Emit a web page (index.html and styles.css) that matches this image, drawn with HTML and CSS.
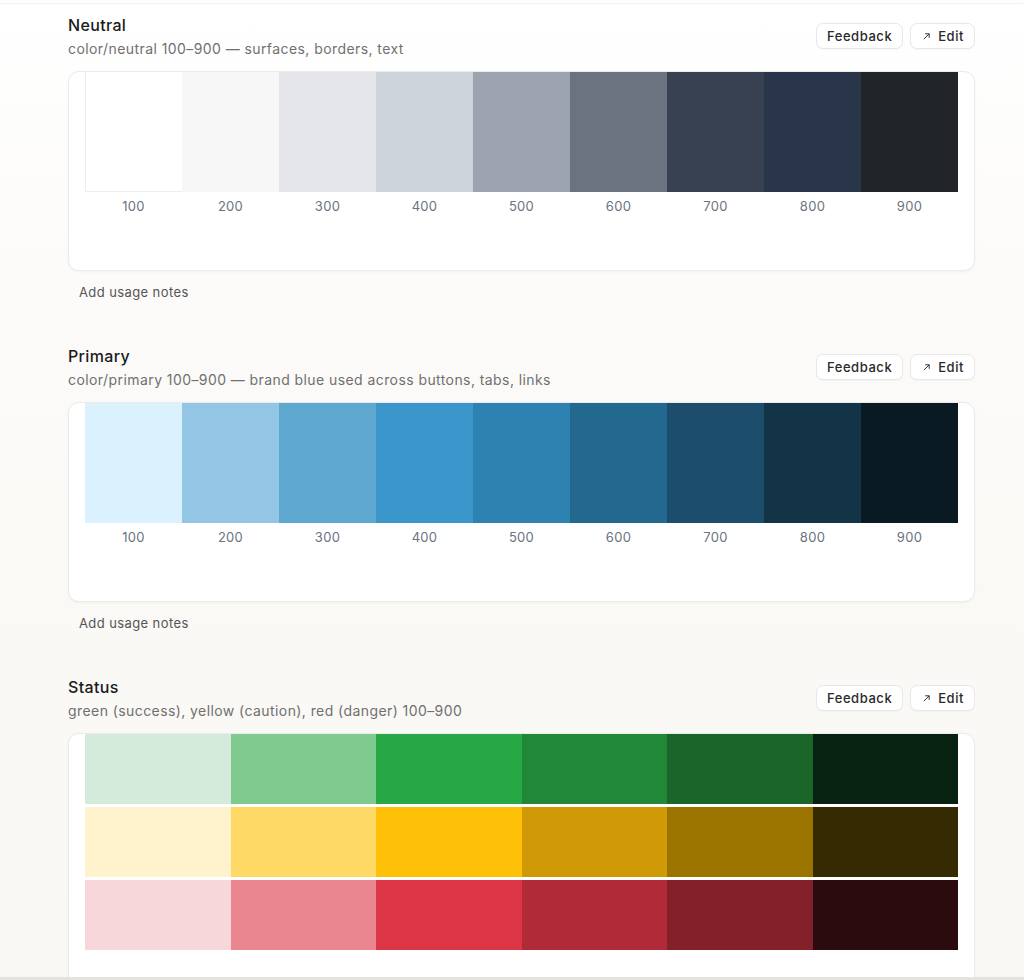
FILE: index.html
```html
<!DOCTYPE html>
<html lang="en">
<head>
<meta charset="utf-8">
<title>Color tokens</title>
<link rel="stylesheet" href="styles.css">
</head>
<body>
<div class="topline"></div>
<main class="page">

  <section class="section">
    <header class="head">
      <div class="titles">
        <h2 class="title">Neutral</h2>
        <p class="sub">color/neutral 100–900 — surfaces, borders, text</p>
      </div>
      <div class="actions">
        <button class="btn">Feedback</button>
        <button class="btn"><svg class="arrow" viewBox="0 0 10 10" width="9" height="9"><path d="M2 8 L8 2 M3.5 2 H8 V6.5" fill="none" stroke="currentColor" stroke-width="1.1"/></svg>Edit</button>
      </div>
    </header>
    <div class="card">
      <div class="scale">
        <div class="step"><div class="sw n100 edge"></div><span class="lbl">100</span></div>
        <div class="step"><div class="sw n200"></div><span class="lbl">200</span></div>
        <div class="step"><div class="sw n300"></div><span class="lbl">300</span></div>
        <div class="step"><div class="sw n400"></div><span class="lbl">400</span></div>
        <div class="step"><div class="sw n500"></div><span class="lbl">500</span></div>
        <div class="step"><div class="sw n600"></div><span class="lbl">600</span></div>
        <div class="step"><div class="sw n700"></div><span class="lbl">700</span></div>
        <div class="step"><div class="sw n800"></div><span class="lbl">800</span></div>
        <div class="step"><div class="sw n900"></div><span class="lbl">900</span></div>
      </div>
    </div>
    <p class="notes">Add usage notes</p>
  </section>

  <section class="section">
    <header class="head">
      <div class="titles">
        <h2 class="title">Primary</h2>
        <p class="sub">color/primary 100–900 — brand blue used across buttons, tabs, links</p>
      </div>
      <div class="actions">
        <button class="btn">Feedback</button>
        <button class="btn"><svg class="arrow" viewBox="0 0 10 10" width="9" height="9"><path d="M2 8 L8 2 M3.5 2 H8 V6.5" fill="none" stroke="currentColor" stroke-width="1.1"/></svg>Edit</button>
      </div>
    </header>
    <div class="card">
      <div class="scale">
        <div class="step"><div class="sw p100"></div><span class="lbl">100</span></div>
        <div class="step"><div class="sw p200"></div><span class="lbl">200</span></div>
        <div class="step"><div class="sw p300"></div><span class="lbl">300</span></div>
        <div class="step"><div class="sw p400"></div><span class="lbl">400</span></div>
        <div class="step"><div class="sw p500"></div><span class="lbl">500</span></div>
        <div class="step"><div class="sw p600"></div><span class="lbl">600</span></div>
        <div class="step"><div class="sw p700"></div><span class="lbl">700</span></div>
        <div class="step"><div class="sw p800"></div><span class="lbl">800</span></div>
        <div class="step"><div class="sw p900"></div><span class="lbl">900</span></div>
      </div>
    </div>
    <p class="notes">Add usage notes</p>
  </section>

  <section class="section">
    <header class="head">
      <div class="titles">
        <h2 class="title">Status</h2>
        <p class="sub">green (success), yellow (caution), red (danger) 100–900</p>
      </div>
      <div class="actions">
        <button class="btn">Feedback</button>
        <button class="btn"><svg class="arrow" viewBox="0 0 10 10" width="9" height="9"><path d="M2 8 L8 2 M3.5 2 H8 V6.5" fill="none" stroke="currentColor" stroke-width="1.1"/></svg>Edit</button>
      </div>
    </header>
    <div class="card status">
      <div class="srow">
        <div class="ss g1"></div><div class="ss g2"></div><div class="ss g3"></div><div class="ss g4"></div><div class="ss g5"></div><div class="ss g6"></div>
      </div>
      <div class="srow">
        <div class="ss y1"></div><div class="ss y2"></div><div class="ss y3"></div><div class="ss y4"></div><div class="ss y5"></div><div class="ss y6"></div>
      </div>
      <div class="srow">
        <div class="ss r1"></div><div class="ss r2"></div><div class="ss r3"></div><div class="ss r4"></div><div class="ss r5"></div><div class="ss r6"></div>
      </div>
    </div>
  </section>

</main>
<div class="bottombar"></div>
</body>
</html>
```

FILE: styles.css
```css
* { box-sizing: border-box; }

html, body {
  margin: 0;
  padding: 0;
}

body {
  font-family: Inter, "Liberation Sans", Arial, sans-serif;
  background: linear-gradient(180deg, #ffffff 0px, #fcfbf9 260px, #faf9f6 600px, #f9f8f5 980px);
  min-height: 980px;
  color: #1d1d1f;
}

.topline {
  height: 4px;
  border-bottom: 1px solid #f0f0f0;
}

.page {
  padding: 11px 49px 0 68px;
  width: 1024px;
}

.section {
  margin-bottom: 46px;
}

.head {
  display: flex;
  justify-content: space-between;
  align-items: center;
}

.title {
  margin: 0;
  font-size: 16px;
  line-height: 20px;
  font-weight: 500;
  letter-spacing: 0.35px;
  color: #1a1a1a;
}

.sub {
  margin: 4px 0 0;
  font-size: 14px;
  line-height: 20px;
  letter-spacing: 0.42px;
  color: #707070;
}

.actions {
  display: flex;
  gap: 7px;
  margin-top: -2px;
}

.btn {
  font-family: inherit;
  display: flex;
  align-items: center;
  gap: 7px;
  height: 26px;
  padding: 0 10px;
  font-size: 13px;
  font-weight: 500;
  letter-spacing: 0.55px;
  color: #2a2a2a;
  background: #ffffff;
  border: 1px solid #e8e8e8;
  border-radius: 7px;
  box-shadow: 0 1px 1px rgba(0, 0, 0, 0.03);
}

.arrow { color: #333; margin-left: 1px; }

.card {
  margin-top: 12px;
  background: #ffffff;
  border: 1px solid #ebebeb;
  border-radius: 11px;
  box-shadow: 0 1px 3px rgba(0, 0, 0, 0.04);
  padding: 0 16px 56px 16px;
}

.scale {
  display: grid;
  grid-template-columns: repeat(9, 1fr);
}

.step {
  display: flex;
  flex-direction: column;
  align-items: center;
}

.sw {
  width: 100%;
  height: 120px;
}

.sw.edge { box-shadow: inset 1px 0 0 #eeeeee, inset 0 -1px 0 #eeeeee; }

.lbl {
  padding-top: 6px;
  font-size: 13px;
  line-height: 16px;
  letter-spacing: 0.3px;
  color: #6b7280;
}

.notes {
  margin: 13px 0 0 11px;
  font-size: 13px;
  line-height: 16px;
  letter-spacing: 0.4px;
  color: #555555;
}

.status {
  padding-bottom: 40px;
  display: flex;
  flex-direction: column;
  gap: 3px;
}

.srow {
  display: grid;
  grid-template-columns: repeat(6, 1fr);
}

.ss { height: 70px; }

.n100 { background: #ffffff; }
.n200 { background: #f7f7f8; }
.n300 { background: #e5e6ea; }
.n400 { background: #cdd4dc; }
.n500 { background: #9ea4af; }
.n600 { background: #6b7280; }
.n700 { background: #374151; }
.n800 { background: #293548; }
.n900 { background: #212529; }

.p100 { background: #dbf1fd; }
.p200 { background: #93c5e4; }
.p300 { background: #5ea7cf; }
.p400 { background: #3b97cb; }
.p500 { background: #2d82b1; }
.p600 { background: #23688f; }
.p700 { background: #1c4d6d; }
.p800 { background: #133347; }
.p900 { background: #0a1a23; }

.g1 { background: #d4ebdb; }
.g2 { background: #7fca8e; }
.g3 { background: #28a745; }
.g4 { background: #218838; }
.g5 { background: #1a6628; }
.g6 { background: #072210; }

.y1 { background: #fff3cd; }
.y2 { background: #ffd966; }
.y3 { background: #ffc107; }
.y4 { background: #cf9a06; }
.y5 { background: #9b7400; }
.y6 { background: #352a02; }

.r1 { background: #f8d7da; }
.r2 { background: #ea868f; }
.r3 { background: #dc3545; }
.r4 { background: #b02a37; }
.r5 { background: #842029; }
.r6 { background: #2c0b0e; }

.bottombar {
  position: fixed;
  left: 0;
  right: 0;
  bottom: 0;
  height: 3px;
  background: #e4e3df;
}
```
